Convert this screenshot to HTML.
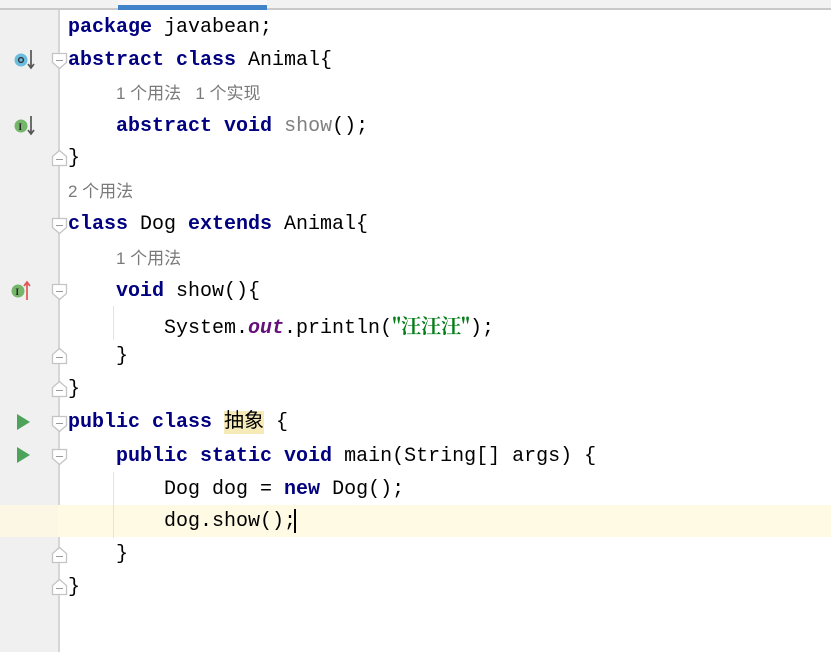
<!DOCTYPE html>
<html><head><meta charset="utf-8"><style>
body{margin:0;width:831px;height:652px;overflow:hidden;background:#fff;position:relative;font-family:"Liberation Mono","Noto Sans CJK SC",monospace;font-size:20px}
.top{position:absolute;left:0;top:0;width:831px;height:8px;background:#f2f2f2;border-bottom:2px solid #c9c9c9}
.tab{position:absolute;left:118px;top:0;width:149px;height:5px;background:#f7f7f7}
.tabb{position:absolute;left:118px;top:5px;width:149px;height:5px;background:#4083c9;z-index:2}
.gut{position:absolute;left:0;top:10px;width:58px;height:642px;background:#f0f0f0;border-right:2px solid #d6d6d6}
.hl{position:absolute;left:0;top:505px;width:831px;height:32px;background:#fffae3}
.hlg{position:absolute;left:0;top:505px;width:58px;height:32px;background:#fbf7e4}
.ln{position:absolute;left:68px;height:33px;line-height:33px;white-space:pre;color:#000}
.k{color:#000080;font-weight:bold}
.g{color:#808080}
.h{color:#7a7a7a;font-family:"Liberation Sans","Noto Sans CJK SC",sans-serif;font-size:17px}
.o{color:#660e7a;font-weight:bold;font-style:italic}
.s{color:#067d17;font-weight:bold;font-family:"Noto Serif CJK SC",serif}
.cls{background:#f5eab8}
.guide{position:absolute;width:1px;background:#e3e3e3}
.cur{position:absolute;left:294px;top:509px;width:2px;height:24px;background:#000}
</style></head><body>
<div class="top"></div><div class="tab"></div><div class="tabb"></div>
<div class="gut"></div>
<div class="hl"></div><div class="hlg"></div>
<div class="guide" style="left:113px;top:306px;height:34px"></div>
<div class="guide" style="left:113px;top:472px;height:66px"></div>

<div class="ln" style="top:11px"><span class="k">package</span> javabean;</div>
<div class="ln" style="top:44px"><span class="k">abstract class</span> Animal{</div>
<div class="ln h" style="top:77px;left:116px">1 个用法   1 个实现</div>
<div class="ln" style="top:110px">    <span class="k">abstract void</span> <span class="g">show</span>();</div>
<div class="ln" style="top:142px">}</div>
<div class="ln h" style="top:175px">2 个用法</div>
<div class="ln" style="top:208px"><span class="k">class</span> Dog <span class="k">extends</span> Animal{</div>
<div class="ln h" style="top:242px;left:116px">1 个用法</div>
<div class="ln" style="top:275px">    <span class="k">void</span> show(){</div>
<div class="ln" style="top:308px">        System.<span class="o">out</span>.println(<span class="s">"汪汪汪"</span>);</div>
<div class="ln" style="top:340px">    }</div>
<div class="ln" style="top:373px">}</div>
<div class="ln" style="top:406px"><span class="k">public class</span> <span class="cls">抽象</span> {</div>
<div class="ln" style="top:440px">    <span class="k">public static void</span> main(String[] args) {</div>
<div class="ln" style="top:473px">        Dog dog = <span class="k">new</span> Dog();</div>
<div class="ln" style="top:505px">        dog.show();</div>
<div class="ln" style="top:538px">    }</div>
<div class="ln" style="top:571px">}</div>
<div class="cur"></div>

<svg width="70" height="652" style="position:absolute;left:0;top:0">
<g fill="#fff" stroke="#c4c4c4" stroke-width="1.3">
<path d="M52.5 53.5h14v9l-7 6l-7-6z"/><path d="M52.5 165.5h14v-9l-7-6l-7 6z"/>
<path d="M52.5 218.5h14v9l-7 6l-7-6z"/><path d="M52.5 284.5h14v9l-7 6l-7-6z"/>
<path d="M52.5 363.5h14v-9l-7-6l-7 6z"/><path d="M52.5 396.5h14v-9l-7-6l-7 6z"/>
<path d="M52.5 416.5h14v9l-7 6l-7-6z"/><path d="M52.5 449.5h14v9l-7 6l-7-6z"/>
<path d="M52.5 562.5h14v-9l-7-6l-7 6z"/><path d="M52.5 594.5h14v-9l-7-6l-7 6z"/>
</g>
<g stroke="#999" stroke-width="1"><path d="M56 60.5h7M56 159.5h7M56 225.5h7M56 291.5h7M56 357.5h7M56 390.5h7M56 423.5h7M56 456.5h7M56 556.5h7M56 588.5h7"/></g>
<circle cx="21" cy="60" r="6.5" fill="#6bbde0"/><circle cx="21" cy="60" r="2.4" fill="none" stroke="#333" stroke-width="1.4"/>
<path d="M31 50v17M28 64l3 4l3-4" stroke="#555" stroke-width="1.7" fill="none"/>
<circle cx="21" cy="126" r="6.5" fill="#75b66a"/><text x="18.5" y="130" font-size="9" font-family="Liberation Serif" font-weight="bold" fill="#222">I</text>
<path d="M31 116v17M28 130l3 4l3-4" stroke="#555" stroke-width="1.7" fill="none"/>
<circle cx="18" cy="291" r="6.5" fill="#75b66a"/><text x="15.5" y="295" font-size="9" font-family="Liberation Serif" font-weight="bold" fill="#222">I</text>
<path d="M27 300v-17M24 286l3-4l3 4" stroke="#e05555" stroke-width="1.7" fill="none"/>
<path d="M17 414l13 8l-13 8z" fill="#4ca35a"/><path d="M17 447l13 8l-13 8z" fill="#4ca35a"/>
</svg>
</body></html>
